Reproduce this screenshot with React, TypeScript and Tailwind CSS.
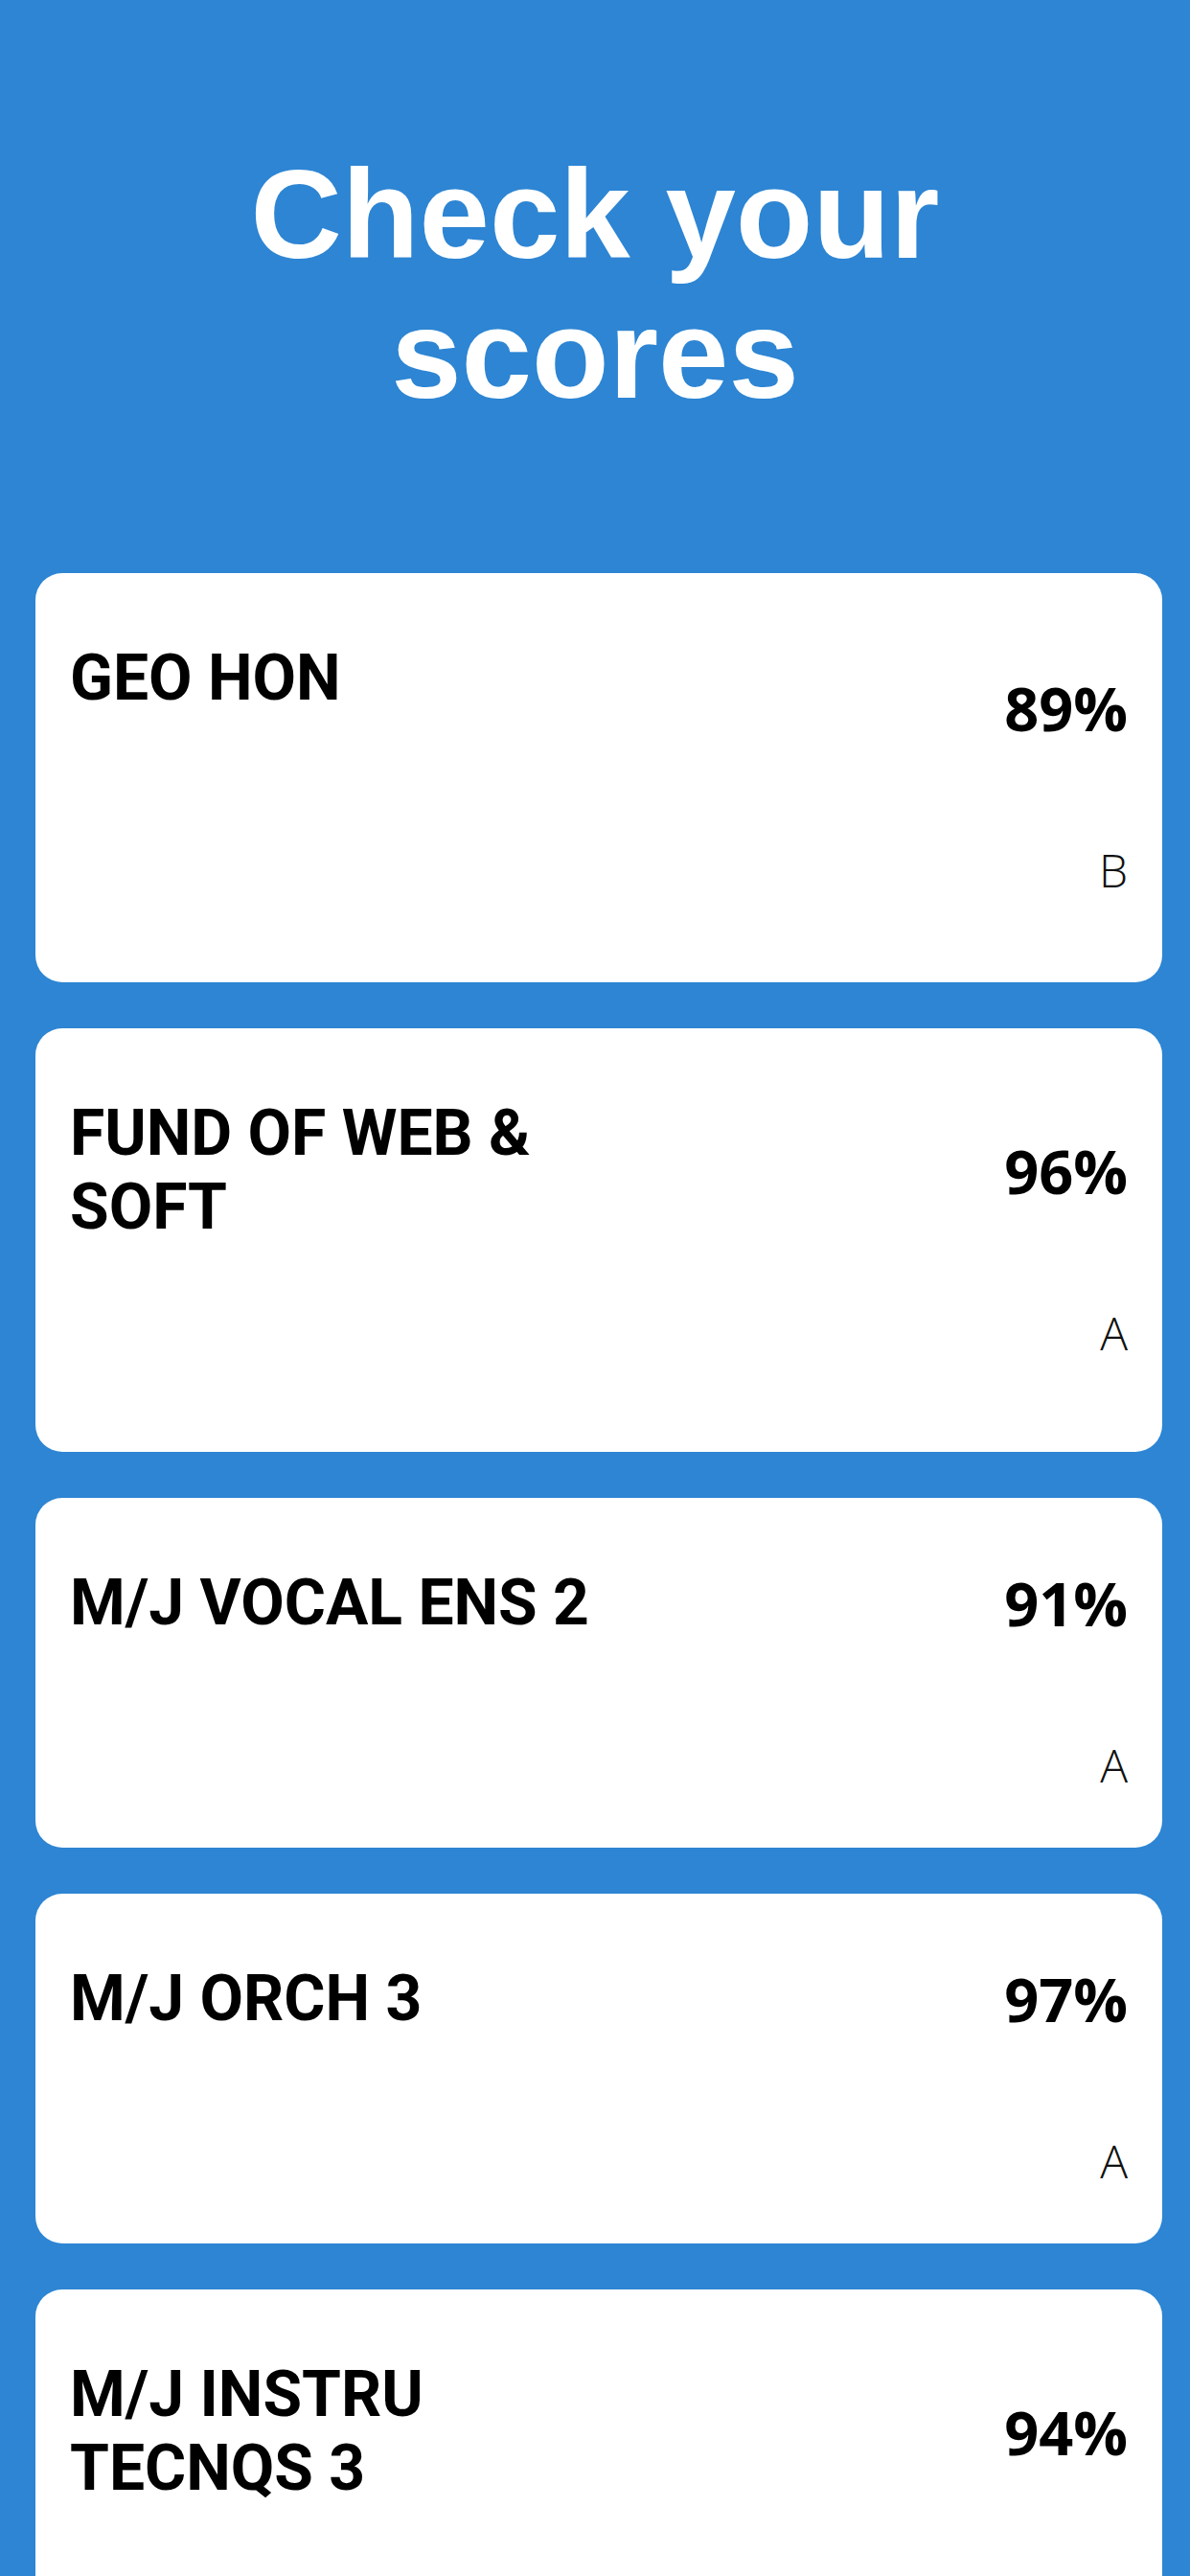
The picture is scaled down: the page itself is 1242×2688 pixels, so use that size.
const scores = [
  { name: "GEO HON", percent: "89%", grade: "B", spacer: "h-[208px]" },
  { name: "FUND OF WEB & SOFT", percent: "96%", grade: "A", spacer: "h-[146px]" },
  { name: "M/J VOCAL ENS 2", percent: "91%", grade: "A", spacer: "h-[146px]" },
  { name: "M/J ORCH 3", percent: "97%", grade: "A", spacer: "h-[146px]" },
  { name: "M/J INSTRU TECNQS 3", percent: "94%", grade: "A", spacer: "h-[146px]" },
];

function ScoreCard({ name, percent, grade, spacer }: (typeof scores)[number]) {
  return (
    <div className="flex items-center rounded-[28px] bg-white px-[36px] py-[71px]">
      <div className="flex w-[580px] shrink-0 flex-col">
        <p className="font-['Roboto',sans-serif] text-[66px] font-bold leading-[77px] text-black">
          {name}
        </p>
        <div className={spacer} />
      </div>
      <div className="flex-1" />
      <div className="flex translate-y-2 flex-col items-end font-['Open_Sans',sans-serif]">
        <p className="text-[63px] font-bold leading-[60px] text-black">{percent}</p>
        <p className="mt-[117px] text-[48px] font-light leading-[44px] text-[#111]">{grade}</p>
      </div>
    </div>
  );
}

export default function App() {
  return (
    <div className="h-[2688px] w-[1242px] overflow-hidden bg-[#2d85d3]">
      <h1 className="pt-[151px] text-center font-['Liberation_Sans',Arial,sans-serif] text-[132px] font-bold leading-[146px] text-white">
        Check your
        <br />
        scores
      </h1>
      <div className="mt-[155px] ml-[37px] mr-[29px] flex flex-col gap-[48px]">
        {scores.map((s) => (
          <ScoreCard key={s.name} {...s} />
        ))}
      </div>
    </div>
  );
}
